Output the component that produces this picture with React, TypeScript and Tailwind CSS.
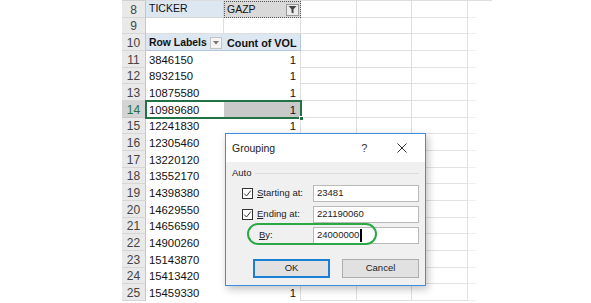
import React from "react";

const SHEET_FONT = { fontFamily: '"Liberation Sans", Arial, sans-serif' };

type RowDef = { n: number; a?: string; b?: string };

const bodyRows: RowDef[] = [
  { n: 11, a: "3846150", b: "1" },
  { n: 12, a: "8932150", b: "1" },
  { n: 13, a: "10875580", b: "1" },
  { n: 14, a: "10989680", b: "1" },
  { n: 15, a: "12241830", b: "1" },
  { n: 16, a: "12305460" },
  { n: 17, a: "13220120" },
  { n: 18, a: "13552170" },
  { n: 19, a: "14398380" },
  { n: 20, a: "14629550" },
  { n: 21, a: "14656590" },
  { n: 22, a: "14900260" },
  { n: 23, a: "15143870" },
  { n: 24, a: "15413420" },
  { n: 25, a: "15459330", b: "1" },
];

function RowHeader({ n, selected }: { n: number; selected?: boolean }) {
  return (
    <div
      className={
        "w-[24px] shrink-0 flex items-center justify-center pt-[2px] text-[12px] border-r border-b " +
        (selected
          ? "bg-[#d3d3d3] text-[#217346] border-r-[#bdbdbd] border-b-[#c8c8c8]"
          : "bg-[#e9e9e9] text-[#444444] border-r-[#c6c6c6] border-b-[#d6d6d6]")
      }
    >
      {n}
    </div>
  );
}

function EmptyCols() {
  return (
    <>
      <div className="w-[56px] shrink-0 border-r border-b border-[#dedede]" />
      <div className="w-[55px] shrink-0 border-r border-b border-[#dedede]" />
      <div className="w-[56px] shrink-0 border-r border-b border-[#e2e2e2]" />
      <div className="w-[8px] shrink-0 border-b border-[#f0f0f0]" />
    </>
  );
}

function Checkbox() {
  return (
    <div className="w-[11px] h-[11px] shrink-0 border border-[#333333] bg-white flex items-center justify-center">
      <svg width="9" height="9" viewBox="0 0 9 9">
        <path d="M1.2 4.6 L3.5 7 L7.8 1.6" fill="none" stroke="#333333" strokeWidth="1" />
      </svg>
    </div>
  );
}

export default function App() {
  return (
    <div className="relative w-[591px] h-[303px] overflow-hidden bg-white" style={SHEET_FONT}>
      {/* Sheet */}
      <div className="flex flex-col pl-[122px]">
        <div className="flex h-[1px]">
          <div className="w-[24px] bg-[#d0d0d0]" />
          <div className="w-[346px] bg-[#dedede]" />
        </div>

        {/* Row 8 */}
        <div className="flex h-[16.67px]">
          <RowHeader n={8} />
          <div className="w-[78px] shrink-0 bg-[#dde7f2] border-r border-b border-[#d4d4d4] flex items-center pl-[3px] pt-[1px] text-[10.5px] text-[#111]">
            TICKER
          </div>
          <div className="w-[77px] shrink-0 bg-[#d9d9d9] border border-dotted border-[#555555] flex items-center pl-[2px] pr-[1px] pt-[1px] text-[10.5px] text-[#111]">
            <span className="flex-1">GAZP</span>
            <div className="w-[13px] h-[12px] bg-[#ececec] border border-[#9a9a9a] flex items-center justify-center">
              <svg width="9" height="9" viewBox="0 0 9 9">
                <path d="M0.5 1 H8.5 L5.5 4.2 V8.5 L3.5 7.5 V4.2 Z" fill="#444444" />
              </svg>
            </div>
          </div>
          <EmptyCols />
        </div>

        {/* Row 9 */}
        <div className="flex h-[16.67px]">
          <RowHeader n={9} />
          <div className="w-[78px] shrink-0 border-r border-b border-[#dedede]" />
          <div className="w-[77px] shrink-0 border-r border-b border-[#dedede]" />
          <EmptyCols />
        </div>

        {/* Row 10 */}
        <div className="flex h-[16.67px]">
          <RowHeader n={10} />
          <div className="w-[78px] shrink-0 bg-[#dde7f2] border-b border-[#b4c7df] flex items-center pl-[3px] pr-[2px] pt-[1px] text-[10.4px] font-bold text-[#111]">
            <span className="flex-1">Row Labels</span>
            <div className="w-[12px] h-[12px] bg-[#f4f4f4] border border-[#c4c4c4] flex items-center justify-center">
              <svg width="6" height="4" viewBox="0 0 6 4">
                <path d="M0 0 H6 L3 3.5 Z" fill="#777777" />
              </svg>
            </div>
          </div>
          <div className="w-[77px] shrink-0 bg-[#dde7f2] border-b border-r border-[#b4c7df] flex items-center pl-[3px] pt-[1px] text-[10.8px] font-bold text-[#111] whitespace-nowrap">
            Count of VOL
          </div>
          <EmptyCols />
        </div>

        {/* Body rows */}
        {bodyRows.map((r) => {
          const sel = r.n === 14;
          return (
            <div key={r.n} className="flex h-[16.67px]">
              <RowHeader n={r.n} selected={sel} />
              <div className="w-[78px] shrink-0 flex items-center pl-[3px] pt-[2px] text-[11.3px] text-[#111]">
                {r.a}
              </div>
              <div
                className={
                  "w-[77px] shrink-0 border-r border-[#dedede] flex items-center justify-end pr-[4px] pt-[2px] text-[11.3px] text-[#111] " +
                  (sel ? "bg-[#c9c9c9]" : "")
                }
              >
                {r.b}
              </div>
              <EmptyCols />
            </div>
          );
        })}
      </div>

      {/* Selection box A14:B14 */}
      <div className="absolute left-[145px] top-[100px] w-[157px] h-[19px] border-2 border-[#217346]" />
      <div className="absolute left-[299px] top-[116px] w-[5px] h-[5px] bg-[#217346] border border-white" />

      {/* Grouping dialog */}
      <div className="absolute left-[225px] top-[133px] w-[201px] h-[153px] border border-[#3c8fdc] bg-[#f0f0f0] shadow-[2px_3px_8px_rgba(0,0,0,0.25)] flex flex-col text-[#222]">
        <div className="h-[28px] bg-white flex items-center pl-[6px] shrink-0">
          <span className="text-[10.5px] pt-[1px]">Grouping</span>
          <span className="ml-[86px] text-[11px] text-[#333]">?</span>
          <svg className="ml-[30px]" width="10" height="10" viewBox="0 0 10 10">
            <path d="M0.5 0.5 L9.5 9.5 M9.5 0.5 L0.5 9.5" stroke="#333333" strokeWidth="1" />
          </svg>
        </div>

        <div className="flex flex-col flex-1">
          <div className="h-[22px] flex items-center pl-[6px] pr-[6px] gap-[3px]">
            <span className="text-[9.5px]">Auto</span>
            <div className="flex-1 h-[1px] bg-[#dcdcdc]" />
          </div>

          <div className="mt-[1px] h-[17px] flex items-center pl-[16px]">
            <Checkbox />
            <span className="ml-[4px] w-[56px] text-[9.5px] whitespace-nowrap">
              <span className="underline">S</span>tarting at:
            </span>
            <div className="w-[106px] h-[17px] bg-white border border-[#b9b9b9] flex items-center pl-[3px] text-[9.5px]">
              23481
            </div>
          </div>

          <div className="mt-[4px] h-[17px] flex items-center pl-[16px]">
            <Checkbox />
            <span className="ml-[4px] w-[56px] text-[9.5px] whitespace-nowrap">
              <span className="underline">E</span>nding at:
            </span>
            <div className="w-[106px] h-[17px] bg-white border border-[#b9b9b9] flex items-center pl-[3px] text-[9.5px]">
              221190060
            </div>
          </div>

          <div className="mt-[4px] h-[17px] flex items-center pl-[16px]">
            <div className="w-[11px] shrink-0" />
            <span className="ml-[6px] w-[54px] text-[9.5px] whitespace-nowrap">
              <span className="underline">B</span>y:
            </span>
            <div className="w-[106px] h-[17px] bg-white border border-[#b9b9b9] flex items-center pl-[3px] text-[9.5px]">
              24000000
              <span className="ml-[1px] w-[1.5px] h-[13px] bg-black" />
            </div>
          </div>

          <div className="mt-[15px] h-[19px] flex items-center pl-[27px] gap-[12px]">
            <div className="w-[77px] h-[19px] bg-[#e1e1e1] border-2 border-[#1c7fd6] flex items-center justify-center text-[9.5px]">
              OK
            </div>
            <div className="w-[77px] h-[19px] bg-[#e1e1e1] border border-[#adadad] flex items-center justify-center text-[9.5px]">
              Cancel
            </div>
          </div>
        </div>

        <div className="absolute left-[21px] top-[89px] w-[130px] h-[22px] border-2 border-[#2aa845] rounded-[12px]" />
      </div>
    </div>
  );
}
